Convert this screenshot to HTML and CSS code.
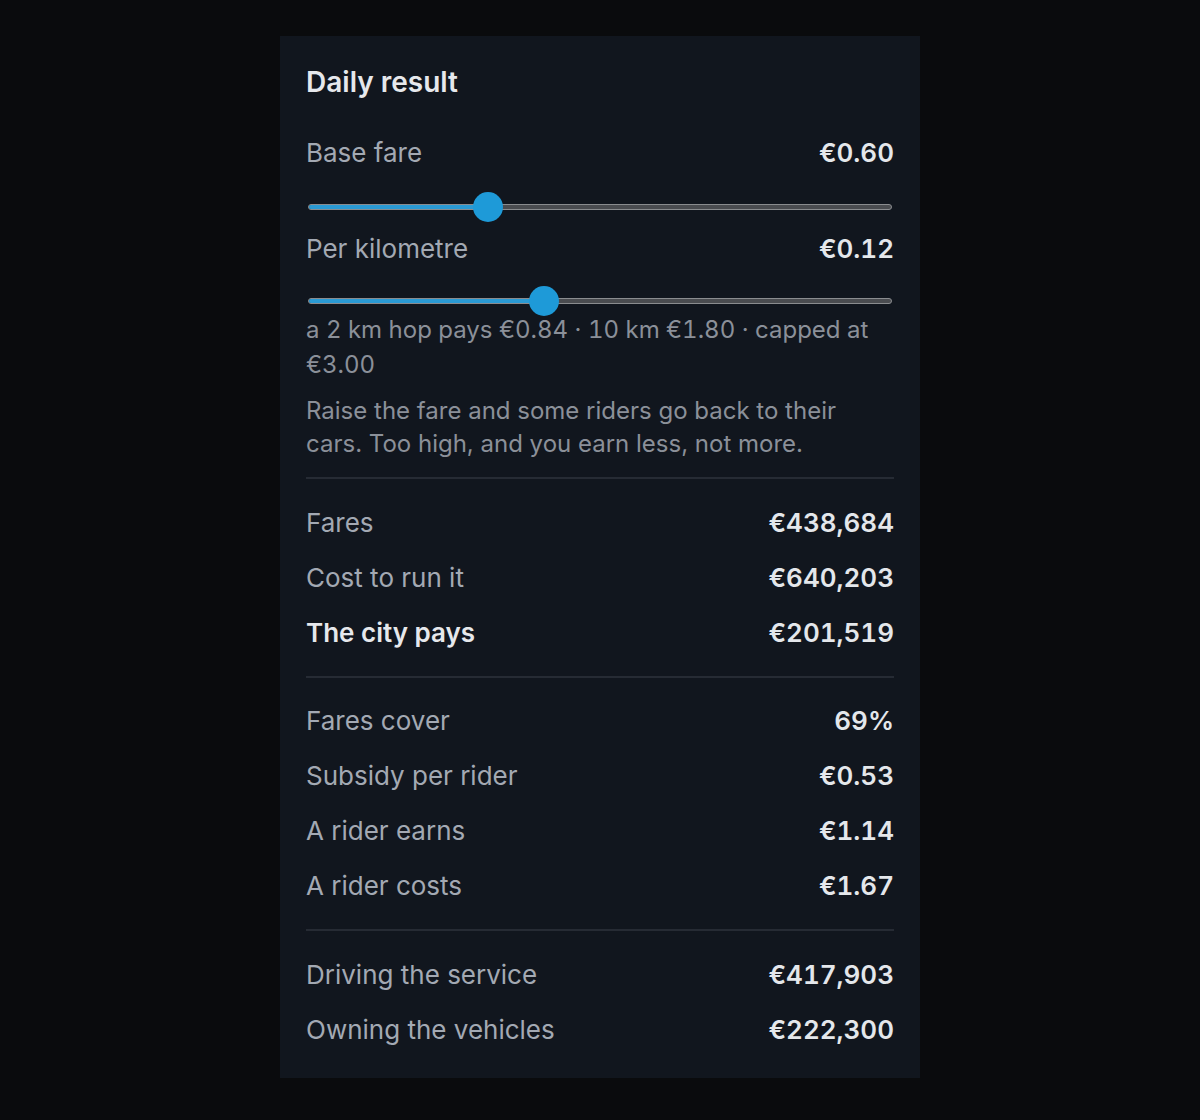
FILE: index.html
```html
<!DOCTYPE html>
<html lang="en">
<head>
<meta charset="utf-8">
<title>Daily result</title>
<link rel="stylesheet" href="styles.css">
</head>
<body>
<main class="card">
  <h2 class="title">Daily result</h2>

  <div class="field">
    <div class="field-head"><span class="label">Base fare</span><span class="value">€0.60</span></div>
    <div class="slider">
      <div class="track"><div class="fill" style="width:30%"></div></div>
      <div class="thumb" style="left:calc(14px + 0.3 * (100% - 30px))"></div>
    </div>
  </div>

  <div class="field">
    <div class="field-head"><span class="label">Per kilometre</span><span class="value">€0.12</span></div>
    <div class="slider">
      <div class="track"><div class="fill" style="width:40%"></div></div>
      <div class="thumb" style="left:calc(14px + 0.4 * (100% - 30px))"></div>
    </div>
  </div>

  <p class="note">a 2 km hop pays €0.84 · 10 km €1.80 · capped at €3.00</p>
  <p class="hint">Raise the fare and some riders go back to their cars. Too high, and you earn less, not more.</p>

  <section class="group">
    <div class="row"><span class="label">Fares</span><span class="value">€438,684</span></div>
    <div class="row"><span class="label">Cost to run it</span><span class="value">€640,203</span></div>
    <div class="row"><span class="label strong">The city pays</span><span class="value">€201,519</span></div>
  </section>

  <section class="group">
    <div class="row"><span class="label">Fares cover</span><span class="value">69%</span></div>
    <div class="row"><span class="label">Subsidy per rider</span><span class="value">€0.53</span></div>
    <div class="row"><span class="label">A rider earns</span><span class="value">€1.14</span></div>
    <div class="row"><span class="label">A rider costs</span><span class="value">€1.67</span></div>
  </section>

  <section class="group last">
    <div class="row"><span class="label">Driving the service</span><span class="value">€417,903</span></div>
    <div class="row"><span class="label">Owning the vehicles</span><span class="value">€222,300</span></div>
  </section>
</main>
</body>
</html>
```

FILE: styles.css
```css
* { box-sizing: border-box; }

body {
  margin: 0;
  background: #0a0b0d;
  font-family: Inter, "Noto Sans", "Liberation Sans", sans-serif;
  color: #e4e7eb;
}

.card {
  width: 640px;
  margin: 36px auto 0;
  background: #11161e;
  padding: 26px 26px 21px;
}

.title {
  margin: 0;
  font-size: 28px;
  line-height: 40px;
  font-weight: 600;
  color: #e6e8ec;
}

.field-head {
  display: flex;
  justify-content: space-between;
  align-items: center;
  line-height: 38px;
  font-size: 26px;
}

.field:first-of-type .field-head { margin-top: 32px; }

.label { color: #a3a9b3; font-weight: 400; }
.label.strong { color: #e6e8ec; font-weight: 600; }
.value {
  color: #e4e7eb;
  font-weight: 600;
  font-variant-numeric: tabular-nums;
}

.slider {
  position: relative;
  height: 30px;
  margin: 20px 2px 8px 2px;
}

.track {
  position: absolute;
  left: 0;
  right: 0;
  top: 12px;
  height: 6px;
  border-radius: 3px;
  background: #4a4c50;
  border: 1px solid #8a8c8f;
  overflow: hidden;
}

.fill {
  height: 100%;
  background: #2a9ad4;
}

.thumb {
  position: absolute;
  top: 0;
  width: 30px;
  height: 30px;
  margin-left: -15px;
  border-radius: 50%;
  background: #1e9ad8;
}

.field + .field .field-head { margin-top: 0; }
.field + .field .slider { margin-top: 18px; margin-bottom: 0; }

.note {
  margin: -4px 0 0;
  font-size: 24px;
  line-height: 35px;
  color: #8b9099;
  font-variant-numeric: tabular-nums;
}

.hint {
  margin: 12px 0 0;
  font-size: 24px;
  line-height: 33px;
  color: #8b9099;
}

.group {
  margin-top: 17px;
  border-top: 2px solid #262b34;
  padding-top: 16px;
}

.group + .group {
  margin-top: 16px;
  padding-top: 15px;
}

.group + .group.last { padding-top: 16px; }

.row {
  display: flex;
  justify-content: space-between;
  align-items: center;
  font-size: 26px;
  line-height: 39px;
  padding: 8px 0;
}
```
